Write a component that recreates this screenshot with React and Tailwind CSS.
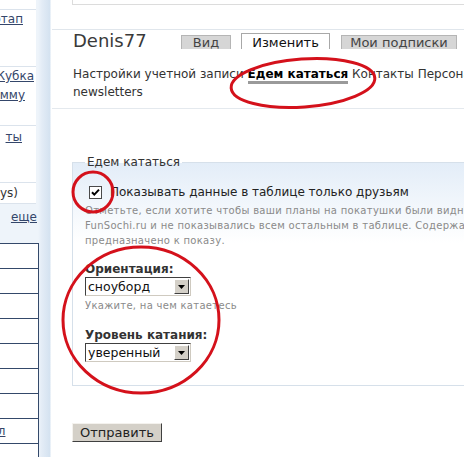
import React from "react";

const sideLinks = "text-[12px] leading-[19px] text-[#34466a] underline whitespace-nowrap";

function Select({ value }) {
  return (
    <div className="flex h-[19px] w-[106px] items-center border border-t-[#404040] border-l-[#404040] border-r-[#cfcac0] border-b-[#cfcac0] bg-white">
      <span className="flex-1 pl-[2px] text-[12.5px] leading-[15px] text-[#111] whitespace-nowrap">
        {value}
      </span>
      <span className="mr-[1px] flex h-[15px] w-[15px] items-center justify-center border border-t-white border-l-white border-r-[#404040] border-b-[#404040] bg-[#d4d0c8]">
        <svg width="7" height="4" viewBox="0 0 7 4">
          <path d="M0 0h7L3.5 4z" fill="#000" />
        </svg>
      </span>
    </div>
  );
}

function Sidebar() {
  const rows = [0, 1, 2, 3, 4, 5, 6, 7, 8];
  return (
    <aside className="w-[52px] shrink-0 bg-[linear-gradient(to_right,#eef4fa_0,#eef4fa_38px,#e3ecf6_42px,#d4e2f0_50px,#ffffff_51px)]">
      <div className="w-[36px]">
        <div className="h-[10px] border-b border-[#dbe3ec] bg-white" />
        <div className="h-[57px] overflow-hidden border-b border-[#dbe3ec] bg-white">
          <div className="flex justify-end pr-[13px]">
            <span className={sideLinks}>этап</span>
          </div>
        </div>
        <div className="h-[59px] overflow-hidden border-b border-[#dbe3ec] bg-white">
          <div className="flex justify-end pr-[2px]">
            <span className={sideLinks}>Кубка</span>
          </div>
          <div className="flex justify-end pr-[11px]">
            <span className={sideLinks}>мму</span>
          </div>
        </div>
        <div className="h-[57px] overflow-hidden border-b border-[#dbe3ec] bg-white pt-[2px]">
          <div className="flex justify-end pr-[14px]">
            <span className={sideLinks}>ты</span>
          </div>
        </div>
        <div className="h-[21px] overflow-hidden border-b border-[#dbe3ec] bg-white pt-[1px]">
          <div className="flex justify-end pr-[18px]">
            <span className="text-[12px] leading-[19px] text-[#333] whitespace-nowrap">ys)</span>
          </div>
        </div>
      </div>
      <div className="mt-[4px] flex w-[37px] justify-end">
        <span className={sideLinks}>еще</span>
      </div>
      <div className="mt-[16px] w-[39px] border-t border-r border-[#34496a] bg-white">
        {rows.map((r) => (
          <div key={r} className="flex h-[25px] justify-start overflow-hidden border-b border-[#34496a]">
            {r === 7 && (
              <span className="-ml-[10px] text-[12px] leading-[25px] text-[#34466a] underline whitespace-nowrap">ил</span>
            )}
          </div>
        ))}
      </div>
    </aside>
  );
}

export default function App() {
  return (
    <div className="relative flex h-[457px] w-[464px] overflow-hidden bg-white font-['DejaVu_Sans',Verdana,sans-serif] text-[#333]">
      <Sidebar />

      <main className="w-[412px] shrink-0 overflow-hidden">
        <div className="ml-[20px] h-[5px] border-l border-b border-[#dcdcdc]" />
        <div className="mt-[24px] border-t border-[#e0e6ec]" />

        <div className="flex pl-[21px]">
          <div className="w-[108px] text-[18px] leading-[22px] text-[#3a3a3a]">Denis77</div>
          <div className="mt-[5px] h-[14px] w-[50px] overflow-hidden border border-b-0 border-[#b5b5b5] bg-[#d6d6d6] text-center text-[13px] leading-[14px] text-[#444]">
            Вид
          </div>
          <div className="ml-[10px] mt-[3px] h-[16px] w-[89px] overflow-hidden border border-b-0 border-[#a8a8a8] bg-white text-center text-[13px] leading-[17px] text-[#111]">
            Изменить
          </div>
          <div className="ml-[11px] mt-[5px] h-[14px] w-[116px] overflow-hidden border border-b-0 border-[#b5b5b5] bg-[#d6d6d6] text-center text-[13px] leading-[14px] text-[#444] whitespace-nowrap">
            Мои подписки
          </div>
        </div>

        <nav className="mt-[14px] pl-[21px] text-[12px] leading-[17px] text-[#333]">
          <div className="whitespace-nowrap">
            Настройки учетной записи{" "}
            <span className="inline-block border-b-[3px] border-[#9a9a9a] font-bold leading-[13px] text-black">
              Едем кататься
            </span>{" "}
            Контакты Персональные данные
          </div>
          <div>newsletters</div>
        </nav>

        <div className="mt-[7px] border-t border-[#e4e9ee]" />

        <fieldset className="ml-[20px] mt-[46px] w-[420px] border border-[#d6e0ea] bg-[linear-gradient(to_bottom,#e3edf8,#ffffff_80px)] pl-[12px] pb-[23px]">
          <legend className="px-[2px] text-[12px] leading-[15px] text-[#333]">Едем кататься</legend>

          <label className="mt-[14px] flex items-center">
            <span className="ml-[4px] flex h-[13px] w-[13px] items-center justify-center border border-[#4a4a4a] bg-white">
              <svg width="9" height="9" viewBox="0 0 9 9">
                <path d="M1 4.2l2.3 2.4L8 1.6" fill="none" stroke="#000" strokeWidth="2" />
              </svg>
            </span>
            <span className="ml-[8px] whitespace-nowrap text-[12px] leading-[16px] text-[#222]">
              Показывать данные в таблице только друзьям
            </span>
          </label>

          <div className="mt-[3px] whitespace-nowrap text-[10px] leading-[15px] tracking-[0.3px] text-[#8a8a8a]">
            <div>Отметьте, если хотите чтобы ваши планы на покатушки были видны только друзьям на</div>
            <div>FunSochi.ru и не показывались всем остальным в таблице. Содержание этого поля не</div>
            <div>предназначено к показу.</div>
          </div>

          <div className="mt-[13px] text-[12px] font-bold leading-[16px] text-[#333]">Ориентация:</div>
          <Select value="сноуборд" />
          <div className="mt-[2px] text-[10px] leading-[15px] tracking-[0.3px] text-[#8a8a8a]">
            Укажите, на чем катаетесь
          </div>

          <div className="mt-[14px] text-[12px] font-bold leading-[16px] text-[#333]">Уровень катания:</div>
          <Select value="уверенный" />
        </fieldset>

        <button className="ml-[20px] mt-[37px] h-[19px] w-[90px] border border-t-[#f4f2ee] border-l-[#f4f2ee] border-r-[#404040] border-b-[#404040] bg-[#d4d0c8] text-[13px] leading-[15px] text-[#222]">
          Отправить
        </button>
      </main>

      <svg className="pointer-events-none absolute inset-0" width="464" height="457" viewBox="0 0 464 457">
        <g fill="none" stroke="#d4111b" strokeWidth="3">
          <ellipse cx="303" cy="83" rx="72" ry="24" transform="rotate(-4 303 83)" />
          <ellipse cx="93" cy="192" rx="20" ry="20" />
          <ellipse cx="141" cy="320" rx="78" ry="73" />
        </g>
      </svg>
    </div>
  );
}
